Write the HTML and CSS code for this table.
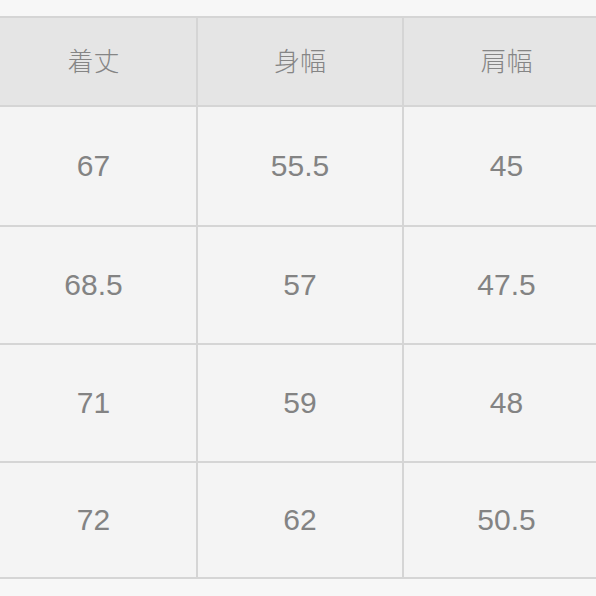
FILE: index.html
```html
<!DOCTYPE html>
<html lang="ja">
<head>
<meta charset="utf-8">
<link rel="stylesheet" href="styles.css">
</head>
<body>
<div class="page">
  <div class="size-table">
    <div class="cell head">着丈</div>
    <div class="cell head">身幅</div>
    <div class="cell head">肩幅</div>
    <div class="cell">67</div>
    <div class="cell">55.5</div>
    <div class="cell">45</div>
    <div class="cell">68.5</div>
    <div class="cell">57</div>
    <div class="cell">47.5</div>
    <div class="cell">71</div>
    <div class="cell">59</div>
    <div class="cell">48</div>
    <div class="cell">72</div>
    <div class="cell">62</div>
    <div class="cell">50.5</div>
  </div>
</div>
</body>
</html>
```

FILE: styles.css
```css
html, body {
  margin: 0;
  padding: 0;
  background: #f7f7f7;
  overflow: hidden;
}

.page {
  width: 596px;
  height: 596px;
  padding-top: 16px;
  box-sizing: border-box;
  overflow: hidden;
}

.size-table {
  display: grid;
  grid-template-columns: 205px 204px 205px;
  grid-template-rows: 87px 118px 116px 116px 114px;
  gap: 2px;
  width: 618px;
  margin-left: -9px;
  background: #d5d5d5;
  border-top: 2px solid #d5d5d5;
  border-bottom: 2px solid #d5d5d5;
}

.cell {
  display: flex;
  align-items: center;
  justify-content: center;
  background: #f4f4f4;
  color: #838383;
  font-family: "Liberation Sans", Arial, sans-serif;
  font-size: 30px;
}

.head {
  background: #e5e5e5;
  font-family: "Noto Sans CJK JP", "Noto Sans CJK SC", sans-serif;
  font-weight: 300;
  font-size: 26px;
  color: #858585;
  padding-bottom: 4px;
}
```
